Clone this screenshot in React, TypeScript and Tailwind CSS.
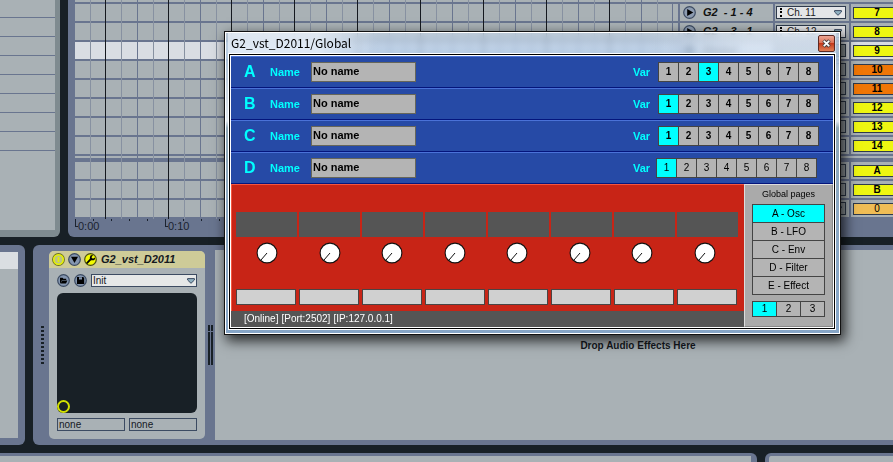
import React from "react";

const FONT = "font-['Liberation_Sans',Arial,sans-serif]";

type Row = {
  id: string;
  name: string;
  channel: string;
  color: string;
  selected?: boolean;
  master?: boolean;
};

const arrangeRows: Row[] = [
  { id: "7", name: "G2  - 1 - 4", channel: "Ch. 11", color: "bg-[#eef611]" },
  { id: "8", name: "G2  - 3 - 1", channel: "Ch. 12", color: "bg-[#eef611]" },
  { id: "9", name: "Global", channel: "", color: "bg-[#eef611]", selected: true },
  { id: "10", name: "", channel: "", color: "bg-[#ef7606]" },
  { id: "11", name: "", channel: "", color: "bg-[#ef7606]" },
  { id: "12", name: "", channel: "", color: "bg-[#eef611]" },
  { id: "13", name: "", channel: "", color: "bg-[#eef611]" },
  { id: "14", name: "", channel: "", color: "bg-[#eef611]" },
];

const returnRows: Row[] = [
  { id: "A", name: "", channel: "", color: "bg-[#eef611]" },
  { id: "B", name: "", channel: "", color: "bg-[#eef611]" },
  { id: "0", name: "", channel: "", color: "bg-[#efbd55]", master: true },
];

function Caret() {
  return (
    <svg className="pointer-events-none h-[6px] w-[8px] shrink-0" viewBox="0 0 8 6">
      <path d="M.6.6h6.8v1.400L4 5.300.6 2z" fill="#8fb0c0" stroke="#3c4b62" strokeWidth="1" />
    </svg>
  );
}

function TrackRow({ row }: { row: Row }) {
  const tone = row.selected ? "bg-[#d9dde3]" : "bg-[#a9b1b5]";
  return (
    <div className="flex h-[19px] border-b-2 border-[#69758f]">
      <div className={`min-w-0 flex-1 ${tone}`} />
      <div className={`ml-px w-[5px] ${tone}`} />
      <div className={`ml-[2px] flex w-[93px] items-center gap-[7px] pl-[3px] ${tone}`}>
        {row.name && (
          <>
            <button aria-label={`Unfold ${row.name}`} className="h-[13px] w-[13px] shrink-0">
              <svg className="h-[13px] w-[13px]" viewBox="0 0 13 13">
                <circle cx="6.5" cy="6.5" r="5.8" fill="#8d9cb1" stroke="#3c4b62" strokeWidth="1.2" />
                <path d="M4.200 3v7L10.300 6.500z" fill="#000" />
              </svg>
            </button>
            <span className="whitespace-pre text-[11px] font-bold italic leading-none text-[#111]">
              {row.name}
            </span>
          </>
        )}
      </div>
      <div className={`ml-[2px] flex w-[74px] items-center pl-px ${tone}`}>
        {row.channel ? (
          <div className="flex h-[13px] w-[70px] items-center border border-[#2e3a4c] bg-[#e4e6e8] pl-[3px] pr-[3px]">
            <span className="h-[9px] w-0 border-l-2 border-dotted border-black" />
            <select
              aria-label={`Channel for track ${row.id}`}
              className="min-w-0 flex-1 appearance-none bg-transparent pl-[5px] text-[10px] leading-none text-[#222]"
            >
              <option>{row.channel}</option>
            </select>
            <Caret />
          </div>
        ) : (
          <div className="flex h-[13px] w-[70px] items-center justify-end border border-[#2e3a4c] bg-[#9aa2a6] pr-[3px]">
            {row.master && <Caret />}
          </div>
        )}
      </div>
      <div className={`ml-[2px] flex w-[42px] items-center pl-[2px] ${tone}`}>
        <button
          className={`h-[12px] w-full border border-r-0 border-[#2e3a4c] pl-[7px] text-[10px] leading-none text-black ${row.color} ${row.master ? "" : "font-bold"}`}
        >
          {row.id}
        </button>
      </div>
    </div>
  );
}

function GridLines() {
  return (
    <svg className="pointer-events-none absolute inset-y-0 left-0 h-full w-[597px]" aria-hidden="true">
      <defs>
        <pattern id="bars" x="-32" y="0" width="63" height="300" patternUnits="userSpaceOnUse">
          <rect x="15" width="1" height="300" fill="#8791a1" />
          <rect x="31" width="1" height="300" fill="#69758f" />
          <rect x="47" width="1" height="300" fill="#8791a1" />
          <rect x="62" width="1" height="300" fill="#15191f" />
        </pattern>
      </defs>
      <rect width="597" height="100%" fill="url(#bars)" />
    </svg>
  );
}

function Arrangement() {
  return (
    <section className="min-w-0 flex-1 overflow-hidden rounded-bl-[6px] bg-[#69758f] pl-[7px]">
      <div className="relative">
        <div className="h-[4px] border-b-2 border-[#69758f] bg-[#a9b1b5]" />
        {arrangeRows.map((r) => (
          <TrackRow key={r.id} row={r} />
        ))}
        <div className="h-[6px] border-b-4 border-[#69758f] bg-[#a9b1b5]" />
        {returnRows.map((r) => (
          <TrackRow key={r.id} row={r} />
        ))}
        <GridLines />
      </div>
      <div className="flex h-[18px] text-[11px] leading-[14px] text-[#1b2330]">
        {["0:00", "0:10", "0:20"].map((t) => (
          <div key={t} className="relative flex w-[90px]">
            <span className="h-[8px] w-[3px] border-b border-l border-[#1b2330]" />
            <span>{t}</span>
            <div className="absolute inset-x-0 top-0 flex h-[2px]">
              {[0, 1, 2, 3, 4].map((k) => (
                <span key={k} className="w-[18px] border-l border-[#1b2330]" />
              ))}
            </div>
          </div>
        ))}
      </div>
    </section>
  );
}

const varNumbers = ["1", "2", "3", "4", "5", "6", "7", "8"];

function SlotRow({ letter, active, plain }: { letter: string; active: string; plain?: boolean }) {
  return (
    <div className="flex h-[32px] items-center border-b border-t border-b-[#04157c] border-t-[#4a72d8] bg-[#264aa6] pl-[13px] text-[11px] font-bold text-[#0ff]">
      <span className="w-[26px] text-[16px]">{letter}</span>
      <label htmlFor={`name-${letter}`} className="w-[41px]">
        Name
      </label>
      <input
        id={`name-${letter}`}
        defaultValue="No name"
        className="h-[20px] w-[105px] border border-[#66665a] bg-[#b4b4b4] pb-[2px] pl-px text-[11px] font-bold text-black"
      />
      <div className={`ml-auto flex items-center ${plain ? "pr-[16px]" : "pr-[14px]"}`}>
        <span className={plain ? "w-[23px]" : "w-[25px]"}>Var</span>
        <div className="flex h-[20px] divide-x divide-[#444] border border-[#444]">
          {varNumbers.map((n, i) => (
            <button
              key={n}
              className={`text-[10px] leading-none text-black ${i === 7 ? "w-[19px]" : "w-[20px]"} ${n === active ? "bg-[#0ff]" : "bg-[#b4b4b4]"} ${plain ? "font-normal" : "font-bold"}`}
            >
              {n}
            </button>
          ))}
        </div>
      </div>
    </div>
  );
}

function Knob() {
  return (
    <svg className="h-[22px] w-[22px]" viewBox="0 0 22 22" role="img" aria-label="Knob">
      <circle cx="11" cy="11" r="9.9" fill="#fff" stroke="#111" strokeWidth="1.1" />
      <path d="M11 11l-6 7" stroke="#111" strokeWidth="1" />
    </svg>
  );
}

const pages = ["A - Osc", "B - LFO", "C - Env", "D - Filter", "E - Effect"];

function PluginWindow() {
  return (
    <div className="absolute left-[224px] top-[31px] w-[617px] border border-[#111] shadow-[3px_5px_12px_1px_rgba(0,0,0,0.75)]">
      <div className="border border-white bg-[linear-gradient(180deg,#c4d4e6b3_0px,#a9c6e6b3_22px,#d4e0ecdd_60px,#e6eef5ee_88px,#8fa9b8ee_95px,#8ba8c4_180px,#86a5c6_300px)] pb-[3px] pl-[2px] pr-[3px] backdrop-blur-[3px]">
        <div className="flex h-[20px] items-center justify-between bg-[linear-gradient(90deg,#eef4fbb3_0px,#eef4fbb3_90px,transparent_150px,transparent_420px,#eef4fb80_520px)] pl-[3px]">
          <h1 className="font-['Noto_Sans_CJK_SC','Open_Sans',sans-serif] text-[12px] leading-none text-black">
            G2_vst_D2011/Global
          </h1>
          <button
            aria-label="Close"
            className="mr-px flex h-[17px] w-[17px] items-center justify-center rounded-[2px] border border-[#5c2a24] bg-[linear-gradient(180deg,#eda695_0%,#dd7257_45%,#c43a1c_50%,#e08056_100%)]"
          >
            <svg className="h-[9px] w-[9px]" viewBox="0 0 9 9">
              <path d="M1.5 1.5l6 6m0-6l-6 6" stroke="#444" strokeWidth="3.6" />
              <path d="M1.8 1.8l5.400 5.400m0-5.400l-5.400 5.400" stroke="#fff" strokeWidth="1.8" />
            </svg>
          </button>
        </div>
        <div className="border border-white">
          <div className="border border-black">
            <div className="border border-white">
              <SlotRow letter="A" active="3" />
              <SlotRow letter="B" active="1" />
              <SlotRow letter="C" active="1" />
              <SlotRow letter="D" active="1" plain />
              <div className="flex">
                <div className="min-w-0 flex-1">
                  <div className="h-[127px] border-l border-t border-[#f4563e] bg-[#c82416] pl-[4px] pr-[4px] pt-[27px]">
                    <div className="grid grid-cols-8">
                      {varNumbers.map((n) => (
                        <div key={n} className="mr-[2px] h-[25px] bg-[#555]" />
                      ))}
                    </div>
                    <div className="mr-[4px] mt-[5px] grid h-[22px] grid-cols-8 justify-items-center">
                      {varNumbers.map((n) => (
                        <Knob key={n} />
                      ))}
                    </div>
                    <div className="mt-[25px] grid grid-cols-8">
                      {varNumbers.map((n) => (
                        <input
                          key={n}
                          aria-label={`Parameter ${n}`}
                          className="block h-[16px] w-[60px] border border-[#4a4444] bg-[#d0d0d0]"
                        />
                      ))}
                    </div>
                  </div>
                  <footer className="flex h-[16px] items-center gap-[3px] bg-[#555] pl-[13px] text-[10px] leading-none text-white">
                    <span>[Online]</span>
                    <span>[Port:2502]</span>
                    <span>[IP:127.0.0.1]</span>
                  </footer>
                </div>
                <aside className="w-[89px] border-b border-l border-r border-t border-b-[#888] border-l-[#ddd] border-r-[#888] border-t-[#ddd] bg-[#aaa] pl-[7px] text-[10px] leading-none text-black">
                  <h2 className="w-[73px] pt-[5px] text-center text-[9px]">Global pages</h2>
                  <div className="mt-[5px] w-[73px] divide-y divide-[#444] border border-[#444]">
                    {pages.map((p, i) => (
                      <button
                        key={p}
                        className={`block w-full text-center ${i === 4 ? "h-[17px]" : "h-[18px]"} ${i === 0 ? "bg-[#0ff]" : "bg-[#b4b4b4]"}`}
                      >
                        {p}
                      </button>
                    ))}
                  </div>
                  <div className="mt-[6px] flex h-[16px] w-[73px] divide-x divide-[#444] border border-[#444]">
                    {["1", "2", "3"].map((p, i) => (
                      <button key={p} className={`flex-1 ${i === 0 ? "bg-[#0ff]" : "bg-[#b4b4b4]"}`}>
                        {p}
                      </button>
                    ))}
                  </div>
                </aside>
              </div>
            </div>
          </div>
        </div>
      </div>
    </div>
  );
}

type RoundIconProps = {
  fill: string;
  stroke: string;
  label: string;
  children: React.ReactNode;
};

function RoundIcon({ fill, stroke, label, children }: RoundIconProps) {
  return (
    <button aria-label={label} className="h-[13px] w-[13px]">
      <svg className="h-[13px] w-[13px]" viewBox="0 0 13 13">
        <circle cx="6.5" cy="6.5" r="5.8" fill={fill} stroke={stroke} strokeWidth="1.2" />
        {children}
      </svg>
    </button>
  );
}

function Device() {
  return (
    <article className="my-[6px] ml-[5px] w-[156px] overflow-hidden rounded-[5px] bg-[#a9b1b5]">
      <header className="flex h-[17px] items-center gap-[3px] bg-[#cecb98] pl-[3px]">
        <RoundIcon label="Device on" fill="#bcc480" stroke="#6d7020">
          <circle cx="6.5" cy="6.5" r="4.7" fill="none" stroke="#e6f200" strokeWidth="1.6" />
          <path d="M6.5 4v5" stroke="#e6f200" strokeWidth="1.6" />
        </RoundIcon>
        <RoundIcon label="Show parameters" fill="#8496b0" stroke="#3c4b62">
          <path d="M3 3.800h7L6.5 10z" fill="#000" />
        </RoundIcon>
        <RoundIcon label="Show plug-in window" fill="#f2fb00" stroke="#4c4f10">
          <path d="M3.200 9.800l3.600-3.600" stroke="#000" strokeWidth="1.9" strokeLinecap="round" />
          <path d="M9 2.200a2.600 2.600 0 1 0 2 2.200L8.900 5.700 7.400 4.200z" fill="#000" />
        </RoundIcon>
        <h2 className="ml-px text-[11px] font-bold italic leading-none text-[#15191f]">G2_vst_D2011</h2>
      </header>
      <div className="px-[8px]">
        <div className="flex h-[25px] items-center gap-[4px]">
          <RoundIcon label="Load preset" fill="#8496b0" stroke="#3c4b62">
            <path d="M3 9.500V3.800h2.600l.8 1h2.800v1.300H5L4 8.600z" fill="#000" />
            <path d="M3.500 9.500L5.200 6.600h5.200L9 9.500z" fill="#000" />
          </RoundIcon>
          <RoundIcon label="Save preset" fill="#8496b0" stroke="#3c4b62">
            <path d="M3 3h6.200l1 1v6H3z" fill="#000" />
            <path d="M5 3.300h3v2.200H5z" fill="#8496b0" />
          </RoundIcon>
          <div className="flex h-[13px] flex-1 items-center border border-[#3c4b62] bg-[#e6e8e8] pr-px">
            <select
              aria-label="Preset"
              className="min-w-0 flex-1 appearance-none bg-transparent pl-px text-[10px] leading-none text-[#15191f]"
            >
              <option>Init</option>
            </select>
            <Caret />
          </div>
        </div>
        <div className="flex h-[120px] items-end rounded-[6px] bg-[#182026]">
          <div className="h-[13px] w-[13px] rounded-full border-2 border-[#d2e000]" />
        </div>
        <div className="mt-[5px] flex gap-[4px]">
          {["X axis", "Y axis"].map((axis) => (
            <select
              key={axis}
              aria-label={axis}
              className="h-[13px] min-w-0 flex-1 appearance-none border border-[#3c4b62] pl-px text-[10px] leading-none text-[#15191f]"
            >
              <option>none</option>
            </select>
          ))}
        </div>
      </div>
    </article>
  );
}

export default function App() {
  return (
    <main className={`relative flex h-screen flex-col gap-[8px] overflow-hidden bg-[#182026] ${FONT}`}>
      <div className="flex h-[237px] shrink-0 gap-[8px]">
        <aside className="w-[60px] shrink-0 rounded-br-[6px] bg-[#7f8b90] pb-[7px] pr-[5px]">
          <div className="h-full bg-[#a9b1b5]">
            {[0, 1, 2, 3, 4, 5, 6, 7].map((n) => (
              <div key={n} className={`border-b border-[#69758f] ${n === 0 ? "h-[18px]" : "h-[19px]"}`} />
            ))}
          </div>
        </aside>
        <Arrangement />
      </div>
      <div className="flex h-[200px] shrink-0 gap-[8px]">
        <aside className="w-[25px] shrink-0 rounded-r-[6px] bg-[#69758f] py-[7px] pr-[7px]">
          <div className="h-full bg-[#a9b1b5]">
            <div className="h-[17px] bg-[#dadee2]" />
          </div>
        </aside>
        <section className="flex min-w-0 flex-1 rounded-l-[6px] bg-[#69758f]">
          <div className="ml-[8px] flex w-[3px] flex-col gap-[2px] self-center">
            {[0, 1, 2, 3, 4, 5, 6, 7, 8, 9].map((n) => (
              <span key={n} className="h-[2px] bg-[#182026]" />
            ))}
          </div>
          <Device />
          <div className="ml-[3px] flex h-[40px] gap-px self-center">
            {["left", "right"].map((side) => (
              <div key={side} className="flex w-[2px] flex-col gap-px">
                <span className="h-[6px] bg-[#182026]" />
                <span className="flex-1 bg-[#182026]" />
              </div>
            ))}
          </div>
          <div className="my-[5px] ml-[2px] flex flex-1 items-center justify-center bg-[#a9b1b5] pl-[168px] text-[10px] font-bold text-[#15191f]">
            Drop Audio Effects Here
          </div>
        </section>
      </div>
      <div className="flex min-h-0 flex-1 gap-[8px]">
        <div className="flex-1 rounded-tr-[6px] border-r-[6px] border-t-[3px] border-[#69758f] bg-[#a9b1b5]" />
        <div className="w-[128px] rounded-tl-[6px] border-l-[4px] border-t-[3px] border-[#69758f] bg-[#a9b1b5]" />
      </div>
      <PluginWindow />
    </main>
  );
}
